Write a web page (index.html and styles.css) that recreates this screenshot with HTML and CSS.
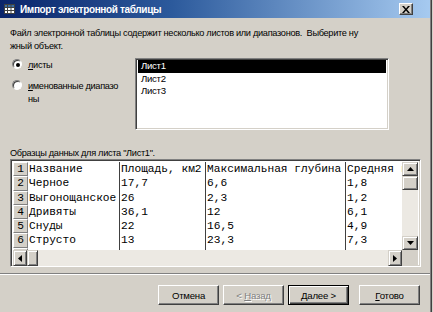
FILE: index.html
```html
<!DOCTYPE html>
<html lang="ru">
<head>
<meta charset="utf-8">
<title>Импорт электронной таблицы</title>
<link rel="stylesheet" href="styles.css">
</head>
<body>
<div class="window">
  <div class="titlebar">
    <svg class="app-icon" width="11" height="10" viewBox="0 0 11 10">
      <rect x="0.5" y="0.5" width="10" height="9" fill="#fff" stroke="#404040"/>
      <rect x="1" y="1" width="9" height="2" fill="#3a6ea5"/>
      <line x1="0.5" y1="3.5" x2="10.5" y2="3.5" stroke="#404040"/>
      <line x1="0.5" y1="6.5" x2="10.5" y2="6.5" stroke="#404040"/>
      <line x1="3.5" y1="0.5" x2="3.5" y2="9.5" stroke="#404040"/>
      <line x1="7" y1="0.5" x2="7" y2="9.5" stroke="#404040"/>
    </svg>
    <span class="title-text">Импорт электронной таблицы</span>
    <span class="close-btn">
      <svg width="8" height="7" viewBox="0 0 8 7"><path d="M0 0h2l2 2.5L6 0h2L5 3.5 8 7H6L4 4.5 2 7H0l3-3.5z" fill="#000"/></svg>
    </span>
  </div>

  <div class="content">
    <p class="desc">Файл электронной таблицы содержит несколько листов или диапазонов.&nbsp; Выберите ну<br>жный объект.</p>

    <div class="top-row">
      <div class="radios">
        <label class="radio"><span class="dot checked"></span><span><u>л</u>исты</span></label>
        <label class="radio"><span class="dot"></span><span><u>и</u>менованные диапазо<br>ны</span></label>
      </div>
      <div class="listbox">
        <div class="item selected">Лист1</div>
        <div class="item">Лист2</div>
        <div class="item">Лист3</div>
      </div>
    </div>

    <div class="sample-label">Образцы данных для листа "Лист1".</div>

    <div class="grid-box">
      <div class="grid-main">
        <div class="data">
          <div class="row"><span class="rh">1</span><span class="c">Название</span><span class="c">Площадь, км2</span><span class="c">Максимальная глубина</span><span class="c last">Средняя глубина</span></div>
          <div class="row"><span class="rh">2</span><span class="c">Черное</span><span class="c">17,7</span><span class="c">6,6</span><span class="c last">1,8</span></div>
          <div class="row"><span class="rh">3</span><span class="c">Выгонощанское</span><span class="c">26</span><span class="c">2,3</span><span class="c last">1,2</span></div>
          <div class="row"><span class="rh">4</span><span class="c">Дривяты</span><span class="c">36,1</span><span class="c">12</span><span class="c last">6,1</span></div>
          <div class="row"><span class="rh">5</span><span class="c">Снуды</span><span class="c">22</span><span class="c">16,5</span><span class="c last">4,9</span></div>
          <div class="row"><span class="rh">6</span><span class="c">Струсто</span><span class="c">13</span><span class="c">23,3</span><span class="c last">7,3</span></div>
          <div class="row"><span class="rh">7</span><span class="c">Лукомское</span><span class="c">15,7</span><span class="c">6,5</span><span class="c last">2,6</span></div>
        </div>
        <div class="vscroll">
          <span class="sbtn"><svg width="7" height="4" viewBox="0 0 7 4"><path d="M3.5 0L7 4H0z"/></svg></span>
          <span class="thumb v"></span>
          <span class="track"></span>
          <span class="sbtn"><svg width="7" height="4" viewBox="0 0 7 4"><path d="M0 0h7L3.5 4z"/></svg></span>
        </div>
      </div>
      <div class="grid-bottom">
        <div class="hscroll">
          <span class="sbtn"><svg width="4" height="7" viewBox="0 0 4 7"><path d="M4 0v7L0 3.5z"/></svg></span>
          <span class="thumb h"></span>
          <span class="track"></span>
          <span class="sbtn"><svg width="4" height="7" viewBox="0 0 4 7"><path d="M0 0l4 3.5L0 7z"/></svg></span>
        </div>
        <span class="corner"></span>
      </div>
    </div>
  </div>

  <div class="separator"></div>

  <div class="buttons">
    <button class="btn">Отмена</button>
    <button class="btn disabled">&lt; <u>Н</u>азад</button>
    <button class="btn default"><u>Д</u>алее &gt;</button>
    <button class="btn final"><u>Г</u>отово</button>
  </div>
</div>
</body>
</html>
```

FILE: styles.css
```css
html, body {
  margin: 0;
  padding: 0;
}
body {
  width: 433px;
  height: 312px;
  overflow: hidden;
  background: #d4d0c8;
  font-family: "Liberation Sans", Arial, sans-serif;
  font-size: 9.2px;
  letter-spacing: -0.3px;
  color: #000;
}
.window {
  width: 430px;
  height: 312px;
  border-right: 1px solid #808080;
  box-shadow: 1px 0 0 #404040, 2px 0 0 #d4d0c8;
  display: flex;
  flex-direction: column;
}
.titlebar {
  height: 18px;
  display: flex;
  align-items: center;
  padding: 0 3px 0 4px;
  background: linear-gradient(to right, #0a246a 0%, #2c5a9c 40%, #a6caf0 100%);
  color: #fff;
}
.app-icon {
  flex: none;
  margin-right: 5px;
}
.title-text {
  font-weight: bold;
  font-size: 10px;
  letter-spacing: -0.35px;
  flex: 1;
  white-space: nowrap;
}
.close-btn {
  width: 14px;
  height: 12px;
  box-sizing: border-box;
  background: #d4d0c8;
  border: 1px solid;
  border-color: #fff #404040 #404040 #fff;
  box-shadow: inset -1px -1px 0 #808080;
  display: flex;
  align-items: center;
  justify-content: center;
  margin-right: 14px;
}
.content {
  padding: 0 0 0 10px;
}
.desc {
  margin: 9px 0 0;
  line-height: 13px;
  white-space: nowrap;
}
.top-row {
  display: flex;
  margin-top: 5px;
}
.radios {
  width: 125px;
  padding-top: 1px;
  display: flex;
  flex-direction: column;
  gap: 8px;
  white-space: nowrap;
}
.radio {
  display: flex;
  align-items: flex-start;
  line-height: 13px;
  gap: 6px;
}
.dot {
  flex: none;
  width: 10px;
  height: 10px;
  border-radius: 50%;
  margin: 0 0 0 2px;
  box-sizing: border-box;
  background: #fff;
  border: 1px solid;
  border-color: #808080 #fff #fff #808080;
  box-shadow: inset 1px 1px 0 #404040;
  position: relative;
}
.dot.checked::after {
  content: "";
  position: absolute;
  left: 3px;
  top: 3px;
  width: 4px;
  height: 4px;
  border-radius: 50%;
  background: #000;
}
.listbox {
  width: 254px;
  height: 72px;
  box-sizing: border-box;
  background: #fff;
  border: 1px solid;
  border-color: #808080 #fff #fff #808080;
  box-shadow: inset 1px 1px 0 #404040, inset -1px -1px 0 #d4d0c8;
  padding: 1px 2px;
  font-size: 9.6px;
}
.item {
  height: 12.5px;
  line-height: 12.5px;
  padding-left: 3px;
}
.item.selected {
  background: #000;
  color: #fff;
}
.sample-label {
  margin-top: 17px;
  line-height: 12px;
}
.grid-box {
  width: 411px;
  height: 108px;
  box-sizing: border-box;
  border: 1px solid;
  border-color: #808080 #fff #fff #808080;
  box-shadow: inset 1px 1px 0 #404040, inset -1px -1px 0 #d4d0c8;
  padding: 2px;
  display: flex;
  flex-direction: column;
  background: #fff;
}
.grid-main {
  display: flex;
  height: 88px;
}
.data {
  flex: 1;
  min-width: 0;
  overflow: hidden;
  font-family: "Liberation Mono", "DejaVu Sans Mono", monospace;
  font-size: 11.2px;
  letter-spacing: 0;
}
.row {
  display: grid;
  grid-template-columns: 15px 92px 86px 140px 100px;
  width: 433px;
  height: 14.3px;
  line-height: 14.3px;
  white-space: pre;
}
.rh {
  box-sizing: border-box;
  background: #d4d0c8;
  border: 1px solid;
  border-color: #fff #808080 #808080 #fff;
  text-align: center;
  line-height: 12.3px;
}
.c {
  box-sizing: border-box;
  padding-left: 1px;
  border-right: 1px solid #404040;
  overflow: hidden;
}
.c.last { border-right: none; }
.vscroll {
  width: 16px;
  flex: none;
  display: flex;
  flex-direction: column;
  background: #ece9e3;
}
.grid-bottom {
  display: flex;
  height: 16px;
}
.hscroll {
  flex: 1;
  display: flex;
  background: #ece9e3;
}
.corner {
  width: 16px;
  background: #d4d0c8;
}
.sbtn, .thumb {
  flex: none;
  width: 16px;
  height: 16px;
  box-sizing: border-box;
  background: #d4d0c8;
  border: 1px solid;
  border-color: #d4d0c8 #404040 #404040 #d4d0c8;
  box-shadow: inset 1px 1px 0 #fff, inset -1px -1px 0 #808080;
  display: flex;
  align-items: center;
  justify-content: center;
}
.vscroll .sbtn { height: 14px; }
.thumb.v { height: 14px; }
.hscroll .sbtn { width: 14px; }
.thumb.h { width: 11px; }
.track { flex: 1; }
.separator {
  margin: 6px 0 0 0;
  height: 0;
  border-top: 1px solid #808080;
  border-bottom: 1px solid #fff;
}
.buttons {
  display: flex;
  justify-content: flex-end;
  padding: 10px 10px 0 0;
  gap: 4px;
}
.btn {
  width: 61px;
  height: 20px;
  box-sizing: border-box;
  font: inherit;
  font-size: 9.6px;
  letter-spacing: -0.2px;
  color: #000;
  background: #d4d0c8;
  border: 1px solid;
  border-color: #fff #404040 #404040 #fff;
  box-shadow: inset -1px -1px 0 #808080;
  padding: 0;
}
.btn.default {
  border: 1px solid #000;
  box-shadow: inset 1px 1px 0 #fff, inset -1px -1px 0 #404040, inset -2px -2px 0 #808080;
}
.btn.disabled {
  color: #808080;
  text-shadow: 1px 1px 0 #fff;
}
.btn.final { margin-left: 6px; }
```
